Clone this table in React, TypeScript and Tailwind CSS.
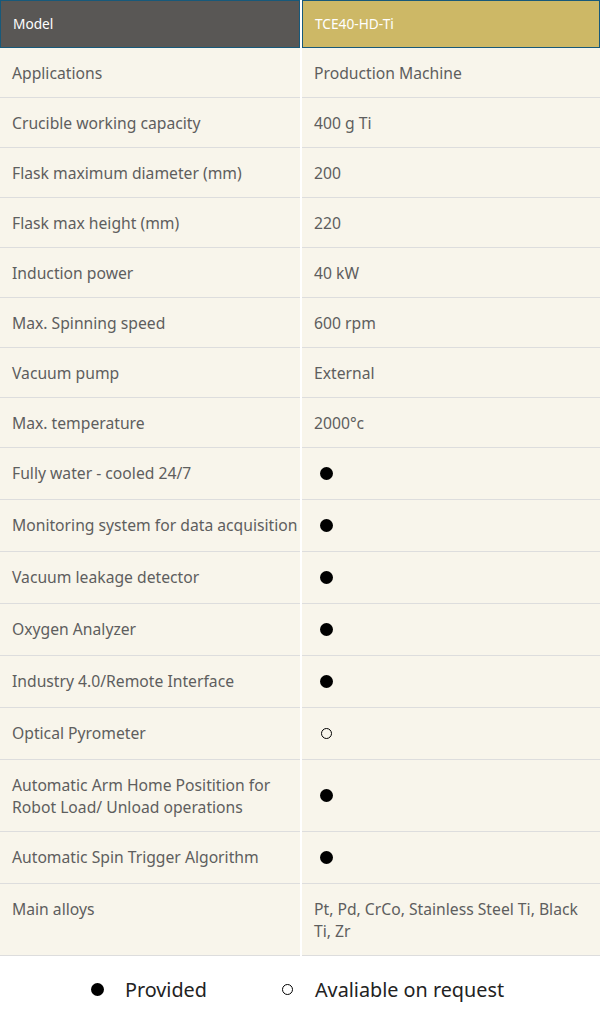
const rows: { label: string; value: string | "full" | "open"; h: string }[] = [
  { label: "Applications", value: "Production Machine", h: "h-[50px]" },
  { label: "Crucible working capacity", value: "400 g Ti", h: "h-[50px]" },
  { label: "Flask maximum diameter (mm)", value: "200", h: "h-[50px]" },
  { label: "Flask max height (mm)", value: "220", h: "h-[50px]" },
  { label: "Induction power", value: "40 kW", h: "h-[50px]" },
  { label: "Max. Spinning speed", value: "600 rpm", h: "h-[50px]" },
  { label: "Vacuum pump", value: "External", h: "h-[50px]" },
  { label: "Max. temperature", value: "2000°c", h: "h-[50px]" },
  { label: "Fully water - cooled 24/7", value: "full", h: "h-[52px]" },
  { label: "Monitoring system for data acquisition", value: "full", h: "h-[52px]" },
  { label: "Vacuum leakage detector", value: "full", h: "h-[52px]" },
  { label: "Oxygen Analyzer", value: "full", h: "h-[52px]" },
  { label: "Industry 4.0/Remote Interface", value: "full", h: "h-[52px]" },
  { label: "Optical Pyrometer", value: "open", h: "h-[52px]" },
  { label: "Automatic Arm Home Positition for Robot Load/ Unload operations", value: "full", h: "h-[72px]" },
  { label: "Automatic Spin Trigger Algorithm", value: "full", h: "h-[52px]" },
  { label: "Main alloys", value: "Pt, Pd, CrCo, Stainless Steel Ti, Black Ti, Zr", h: "h-[72px]" },
];

function Dot({ open }: { open?: boolean }) {
  if (open) return <span className="block w-[11px] h-[11px] rounded-full border-[1.5px] border-black" />;
  return <span className="block w-[13px] h-[13px] rounded-full bg-black" />;
}

export default function App() {
  return (
    <div className="w-[600px] bg-white font-['Noto_Sans','Open_Sans',sans-serif]">
      <div className="grid grid-cols-[300px_298px] gap-x-[2px]">
        <div className="h-[48px] flex items-center px-3 bg-[#595755] border border-[#17597a] text-white text-[13.7px]">
          Model
        </div>
        <div className="h-[48px] flex items-center px-3 bg-[#cdb866] border border-[#17597a] text-white text-[13.7px]">
          TCE40-HD-Ti
        </div>
        {rows.map((r) => (
          <div key={r.label} className="contents">
            <div
              className={`${r.h} px-3 pt-[14px] bg-[#f8f5eb] border-b border-[#dddddd] text-[15.7px] leading-[22px] text-[#5e5e5e] overflow-hidden ${
                r.label.length > 45 ? "whitespace-normal" : "whitespace-nowrap"
              }`}
            >
              {r.label}
            </div>
            {r.value === "full" || r.value === "open" ? (
              <div className={`${r.h} flex items-center pl-[18px] pb-px bg-[#f8f5eb] border-b border-[#dddddd]`}>
                {r.value === "open" ? <span className="pl-px"><Dot open /></span> : <Dot />}
              </div>
            ) : (
              <div
                className={`${r.h} pl-3 pr-2 pt-[14px] bg-[#f8f5eb] border-b border-[#dddddd] text-[15.7px] leading-[22px] text-[#5e5e5e]`}
              >
                {r.value}
              </div>
            )}
          </div>
        ))}
      </div>
      <div className="h-[67px] flex items-center justify-center gap-[75px] pr-[5px] text-[19.8px] text-[#222222]">
        <div className="flex items-center gap-[21px]">
          <span className="block w-[13px] h-[13px] rounded-full bg-black" />
          <span>Provided</span>
        </div>
        <div className="flex items-center gap-[22px]">
          <span className="block w-[11px] h-[11px] rounded-full border-[1.5px] border-black" />
          <span>Avaliable on request</span>
        </div>
      </div>
    </div>
  );
}
